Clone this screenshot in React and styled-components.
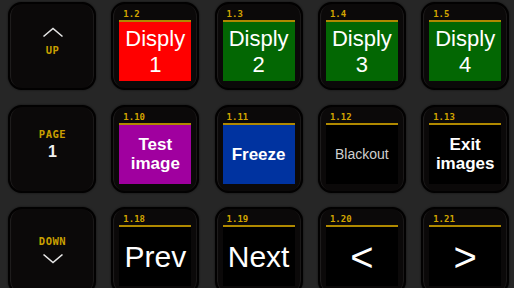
import React from "react";
import styled, { createGlobalStyle } from "styled-components";

const Global = createGlobalStyle`
  html, body { margin: 0; padding: 0; background: #262626; }
  body { width: 514px; height: 288px; overflow: hidden; }
`;

const Grid = styled.div`
  display: grid;
  grid-template-columns: repeat(5, 88px);
  grid-auto-rows: 88px;
  column-gap: 15.3px;
  row-gap: 14.5px;
  padding: 2px 0 0 8px;
  height: 288px;
  box-sizing: border-box;
  overflow: hidden;
  background: #262626;
`;

const Frame = styled.div`
  width: 88px;
  height: 88px;
  box-sizing: border-box;
  border-radius: 14px;
  background: #0b0909;
  border: 2px solid #020101;
  box-shadow:
    inset 2px 0 1px -1px rgba(255, 255, 255, 0.09),
    inset -2px 0 1px -1px rgba(255, 255, 255, 0.07),
    0 0 2px rgba(0, 0, 0, 0.7);
  display: flex;
  flex-direction: column;
  align-items: center;
  padding-top: 5px;
`;

const Display = styled.div`
  width: 72px;
  height: 72px;
  display: flex;
  flex-direction: column;
`;

const Header = styled.div`
  height: 10px;
  border-bottom: 2px solid #b08900;
  display: flex;
  align-items: flex-end;
  padding: 0 0 1px 4px;
  box-sizing: content-box;
  font-family: "DejaVu Sans Mono", "Liberation Mono", monospace;
  font-weight: bold;
  font-size: 9px;
  line-height: 9px;
  color: #d2a400;
`;

const Body = styled.div`
  flex: 1;
  background: ${(p) => p.$bg || "#000"};
  display: flex;
  align-items: center;
  justify-content: center;
  text-align: center;
  font-family: "Liberation Sans", Arial, sans-serif;
  color: ${(p) => p.$color || "#fff"};
  font-size: ${(p) => p.$size}px;
  font-weight: ${(p) => (p.$bold ? "bold" : "normal")};
  line-height: ${(p) => p.$lh}px;
  white-space: pre-line;
`;

const NavBody = styled.div`
  flex: 1;
  display: flex;
  flex-direction: column;
  align-items: center;
  justify-content: center;
  gap: ${(p) => p.$gap}px;
  padding-bottom: ${(p) => p.$shift}px;
  padding-left: 1px;
`;

const NavLabel = styled.div`
  font-family: "DejaVu Sans Mono", "Liberation Mono", monospace;
  font-weight: bold;
  font-size: 10.5px;
  line-height: 9px;
  letter-spacing: 0.5px;
  color: #c9a000;
`;

const PageNum = styled.div`
  font-family: "Liberation Sans", Arial, sans-serif;
  font-weight: bold;
  font-size: 16px;
  line-height: 14px;
  color: #f0f0f0;
`;

const Chevron = ({ down }) => (
  <svg width="22" height="11" viewBox="0 0 22 11">
    <polyline
      points={down ? "1.5,1.5 11,9.5 20.5,1.5" : "1.5,9.5 11,1.5 20.5,9.5"}
      fill="none"
      stroke="#e6e6e6"
      strokeWidth="1.6"
    />
  </svg>
);

const keys = [
  { id: "1.2", text: "Disply\n1", bg: "#ff0000", size: 22, lh: 26 },
  { id: "1.3", text: "Disply\n2", bg: "#036703", size: 22, lh: 26 },
  { id: "1.4", text: "Disply\n3", bg: "#036703", size: 22, lh: 26 },
  { id: "1.5", text: "Disply\n4", bg: "#036703", size: 22, lh: 26 },
  { id: "1.10", text: "Test\nimage", bg: "#a0009f", size: 17, lh: 19, bold: true },
  { id: "1.11", text: "Freeze", bg: "#0033a0", size: 17, lh: 19, bold: true },
  { id: "1.12", text: "Blackout", bg: "#000", size: 14, lh: 16, color: "#cfcfcf" },
  { id: "1.13", text: "Exit\nimages", bg: "#000", size: 17, lh: 19, bold: true },
  { id: "1.18", text: "Prev", bg: "#000", size: 30, lh: 32 },
  { id: "1.19", text: "Next", bg: "#000", size: 30, lh: 32 },
  { id: "1.20", text: "<", bg: "#000", size: 40, lh: 40 },
  { id: "1.21", text: ">", bg: "#000", size: 40, lh: 40 },
];

const Key = ({ k }) => (
  <Frame>
    <Display>
      <Header>{k.id}</Header>
      <Body $bg={k.bg} $size={k.size} $lh={k.lh} $bold={k.bold} $color={k.color}>
        {k.text}
      </Body>
    </Display>
  </Frame>
);

const Nav = ({ children, shift, gap }) => (
  <Frame>
    <Display>
      <NavBody $shift={shift} $gap={gap}>
        {children}
      </NavBody>
    </Display>
  </Frame>
);

export default function App() {
  return (
    <>
      <Global />
      <Grid>
        <Nav shift={8} gap={8}>
          <Chevron />
          <NavLabel>UP</NavLabel>
        </Nav>
        {keys.slice(0, 4).map((k) => (
          <Key key={k.id} k={k} />
        ))}
        <Nav shift={6} gap={6}>
          <NavLabel>PAGE</NavLabel>
          <PageNum>1</PageNum>
        </Nav>
        {keys.slice(4, 8).map((k) => (
          <Key key={k.id} k={k} />
        ))}
        <Nav shift={0} gap={7}>
          <NavLabel>DOWN</NavLabel>
          <Chevron down />
        </Nav>
        {keys.slice(8).map((k) => (
          <Key key={k.id} k={k} />
        ))}
      </Grid>
    </>
  );
}
